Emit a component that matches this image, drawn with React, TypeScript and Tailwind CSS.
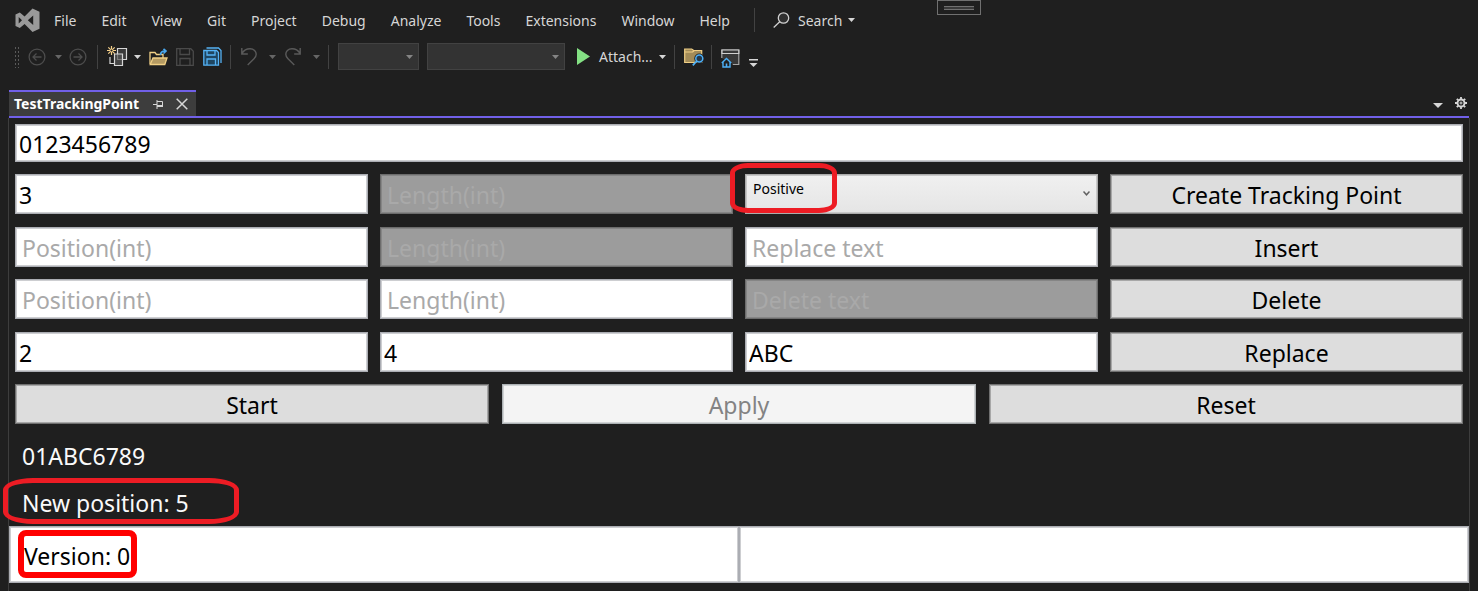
import React from "react";
import clsx from "clsx";

const MENU = ["File", "Edit", "View", "Git", "Project", "Debug", "Analyze", "Tools", "Extensions", "Window", "Help"];

function Caret({ className }: { className?: string }) {
  return (
    <svg width="7" height="4" viewBox="0 0 7 4" className={clsx("shrink-0", className)} fill="currentColor" aria-hidden="true">
      <path d="M0 0h7L3.5 4z" />
    </svg>
  );
}

function Separator() {
  return <div className="h-6 w-px shrink-0 bg-[#424242]" />;
}

function Logo() {
  return (
    <svg width="25" height="25" viewBox="0 0 25 25" aria-hidden="true" className="shrink-0">
      <path
        fill="#999"
        fillRule="evenodd"
        d="M17.5 0.5 24.5 3.8V20.7L17.5 24 9.6 16.1 4.8 20 0.5 18V6.6L4.8 4.6 9.6 8.4ZM18.2 7.5 12.8 12.3 18.2 17.1ZM3.7 9.1V15.6L7 12.3Z"
      />
    </svg>
  );
}

function ArrowCircle({ forward }: { forward?: boolean }) {
  return (
    <svg width="18" height="18" viewBox="0 0 18 18" fill="none" stroke="#4d4d4d" strokeWidth="1.3" aria-hidden="true">
      <circle cx="9" cy="9" r="7.9" />
      {forward ? <path d="M4.5 9h8.5M9.5 5.5 13 9l-3.500 3.500" /> : <path d="M13.500 9H5M8.500 5.500 5 9l3.500 3.500" />}
    </svg>
  );
}

function NewProject() {
  return (
    <svg width="21" height="21" viewBox="0 0 21 21" fill="none" aria-hidden="true">
      <path d="M3 11v6.500h4" stroke="#d6d6d6" strokeWidth="1.200" />
      <path d="M10.500 2.500h9v11h-9z" fill="#3a3a3a" stroke="#d6d6d6" strokeWidth="1.200" />
      <path d="M7.500 8h8v11.500h-8z" fill="#555" fillOpacity=".7" stroke="#d6d6d6" strokeWidth="1.200" />
      <path d="M4.500 0v9M0 4.500h9M1.300 1.300l6.400 6.400M7.700 1.300 1.300 7.700" stroke="#f5d08a" strokeWidth="1.200" />
      <circle cx="4.500" cy="4.500" r="1.100" fill="#202020" />
    </svg>
  );
}

function OpenFolder() {
  return (
    <svg width="20" height="18" viewBox="0 0 20 18" fill="none" aria-hidden="true">
      <path d="M1 16V4.500h5l1.500 2H14V10" stroke="#f0cf85" strokeWidth="1.300" />
      <path d="M1.200 16.500 4 10h14l-2.200 6.500z" fill="#b49a62" stroke="#f0cf85" strokeWidth="1.300" />
      <path d="M11.500 7c0-2.500 1.500-4 4.500-4M14.500.8 17 3l-2.500 2.500" stroke="#4aa8ef" strokeWidth="1.700" />
    </svg>
  );
}

function Save() {
  return (
    <svg width="18" height="18" viewBox="0 0 18 18" fill="none" stroke="#4a4a4a" strokeWidth="1.300" aria-hidden="true">
      <path d="M.7.7h14.100l2.500 2.500v14.100H.7z" />
      <path d="M4 1v5.500h9.500V1M4 17v-6.500h10V17" />
    </svg>
  );
}

function SaveAll() {
  return (
    <svg width="19" height="19" viewBox="0 0 19 19" fill="none" stroke="#55b2f5" strokeWidth="1.300" aria-hidden="true">
      <path d="M3.500 1h12l2.500 2.500v12.500" />
      <path d="M.8 3.500h12.700l2 2v12.700H.8z" fill="#1f4661" />
      <path d="M4 3.500v4.500h8V3.500M4 18v-6h8.500v6" />
    </svg>
  );
}

function Undo({ flip }: { flip?: boolean }) {
  return (
    <svg width="16" height="18" viewBox="0 0 16 18" fill="none" stroke="#5a5a5a" strokeWidth="1.400" aria-hidden="true">
      {flip ? (
        <path d="M15.200 0v6H9.200M15 5.500C13 2 10 .8 7 .8 3 .8.800 3.500.800 6.200c0 2 1 3.300 2.200 4.500l6.300 6.300" />
      ) : (
        <path d="M.8 0v6h6M1 5.500C3 2 6 .8 9 .8c4 0 6.200 2.700 6.200 5.400 0 2-1 3.300-2.200 4.500L6.700 17" />
      )}
    </svg>
  );
}

function FolderSearch() {
  return (
    <svg width="20" height="18" viewBox="0 0 20 18" fill="none" aria-hidden="true">
      <path d="M.7 1h7l2 1.500h8V14.500H.7z" fill="#a28b58" stroke="#f0cf85" strokeWidth="1.200" />
      <path d="M.7 4h8l1.500-1.500" stroke="#f0cf85" strokeWidth="1.200" />
      <circle cx="15.300" cy="10.500" r="5" fill="#202020" />
      <circle cx="15.300" cy="10.500" r="3.500" fill="#24384a" stroke="#4db0f7" strokeWidth="1.500" />
      <path d="m12.800 13-4 4.300" stroke="#4db0f7" strokeWidth="1.700" />
    </svg>
  );
}

function BrowserHome() {
  return (
    <svg width="19" height="19" viewBox="0 0 19 19" fill="none" aria-hidden="true">
      <path d="M.8 9V1h17v14.500h-6" fill="#383838" stroke="#a5a5a5" strokeWidth="1.200" />
      <path d="M1 1h16.800v3.500H1z" fill="#383838" stroke="#d0d0d0" strokeWidth="1.200" />
      <path d="M5.500 9 11 14.500V19H0v-4.500z" fill="#202020" />
      <path d="M.8 14 5.500 9.500l4.700 4.500M2 13v5h7v-5" stroke="#4db0f7" strokeWidth="1.400" />
      <path d="M5.500 18v-3.500" stroke="#4db0f7" strokeWidth="1.600" />
    </svg>
  );
}

function Pin() {
  return (
    <svg width="11" height="9" viewBox="0 0 11 9" fill="none" stroke="#d6d6d6" aria-hidden="true">
      <path d="M0 4.500h4M4 0v9M4 1.500h5.500v5H4" />
      <path d="M4 6h6" strokeWidth="2" />
    </svg>
  );
}

function Gear() {
  return (
    <svg width="12" height="12" viewBox="0 0 12 12" fill="none" stroke="#d6d6d6" aria-hidden="true">
      <path d="M6 0v2M6 10v2M0 6h2M10 6h2M1.800 1.800l1.400 1.400M8.800 8.800l1.400 1.400M1.800 10.200l1.400-1.400M8.800 3.200l1.400-1.400" strokeWidth="1.800" />
      <circle cx="6" cy="6" r="3.500" strokeWidth="1.900" />
      <circle cx="6" cy="6" r="1" />
    </svg>
  );
}

function Field({ label, value, disabled, className }: { label: string; value?: string; disabled?: boolean; className?: string }) {
  return (
    <input
      type="text"
      aria-label={label}
      placeholder={label}
      defaultValue={value}
      disabled={disabled}
      className={clsx(
        "block w-full min-w-0 border pt-px text-[23px] leading-7 text-black outline-none placeholder:text-[#a9a9a9] placeholder:opacity-100",
        disabled
          ? "border-[#6c6c6c] bg-[#9c9c9c] shadow-[inset_0_0_0_1px_#858585]"
          : "border-[#abadb3] bg-white shadow-[inset_0_0_0_1px_#cdced1]",
        value ? "px-[3px]" : "px-[6px]",
        className ?? "h-10"
      )}
    />
  );
}

function Action({ children, disabled }: { children: React.ReactNode; disabled?: boolean }) {
  return (
    <button
      type="button"
      disabled={disabled}
      className={clsx(
        "h-10 w-full border pt-[2px] text-[23px] leading-7",
        disabled
          ? "border-[#adb2b5] bg-[#f4f4f4] text-[#838383] shadow-[inset_0_0_0_1px_#d0d3d4]"
          : "border-[#707070] bg-[#dddddd] text-black shadow-[inset_0_0_0_1px_#a7a7a7]"
      )}
    >
      {children}
    </button>
  );
}

function Combo({ label, className }: { label: string; className: string }) {
  return (
    <div className={clsx("relative shrink-0", className)}>
      <select aria-label={label} disabled className="block h-[27px] w-full appearance-none border border-[#424242] bg-[#333333] opacity-100" />
      <Caret className="pointer-events-none absolute top-3 right-[6px] text-[#858585]" />
    </div>
  );
}

const ROW = "grid grid-cols-4 gap-3";

export default function App() {
  return (
    <div className="relative flex min-h-screen flex-col overflow-hidden bg-[#1f1f1f] font-['Noto_Sans','Open_Sans',sans-serif] text-[#d6d6d6]">
      <div className="absolute top-0 left-[937px] flex h-[15px] w-11 items-center justify-center border border-[#707070]">
        <div className="h-1 w-[30px] border-y border-[#707070] bg-[#3a3a3a]" />
      </div>

      <nav className="flex h-10 items-center pl-[15px] text-sm">
        <Logo />
        <div className="ml-[14px] flex gap-[25px]">
          {MENU.map((item) => (
            <button key={item} type="button" className="pt-px whitespace-nowrap">
              {item}
            </button>
          ))}
        </div>
        <div className="mr-[18px] ml-6 h-6 w-px bg-[#424242]" />
        <button type="button" className="flex items-center">
          <svg width="17" height="16" viewBox="0 0 17 16" fill="none" stroke="#d0d0d0" strokeWidth="1.300" aria-hidden="true">
            <circle cx="10.500" cy="6" r="5.200" fill="#303030" />
            <path d="M6.700 9.800.700 15.500" />
          </svg>
          <span className="ml-2 pt-px">Search</span>
          <Caret className="ml-[6px]" />
        </button>
      </nav>

      <div className="flex h-[33px] items-center pl-[14px] text-sm">
        <div className="h-[22px] w-[6px] shrink-0 bg-[radial-gradient(circle,#5a5a5a_1px,transparent_1px)] bg-[length:3px_4px]" />
        <button type="button" aria-label="Back" className="ml-2"><ArrowCircle /></button>
        <Caret className="ml-[9px] text-[#666]" />
        <button type="button" aria-label="Forward" className="mr-[10px] ml-[7px]"><ArrowCircle forward /></button>
        <Separator />
        <button type="button" aria-label="New project" className="ml-[9px]"><NewProject /></button>
        <Caret className="ml-[6px]" />
        <button type="button" aria-label="Open" className="ml-2"><OpenFolder /></button>
        <button type="button" aria-label="Save" className="ml-[7px]"><Save /></button>
        <button type="button" aria-label="Save all" className="mr-2 ml-[9px]"><SaveAll /></button>
        <Separator />
        <button type="button" aria-label="Undo" className="ml-[10px]"><Undo /></button>
        <Caret className="ml-3 text-[#666]" />
        <button type="button" aria-label="Redo" className="ml-[9px]"><Undo flip /></button>
        <Caret className="mr-2 ml-3 text-[#666]" />
        <Separator />
        <Combo label="Solution configuration" className="ml-[9px] w-[81px]" />
        <Combo label="Solution platform" className="ml-2 w-[138px]" />
        <button type="button" className="mr-2 ml-3 flex items-center">
          <svg width="13" height="17" viewBox="0 0 13 17" aria-hidden="true">
            <path d="M0 0v17l13-8.500z" fill="#84e184" />
          </svg>
          <span className="ml-[9px] w-[54px] whitespace-nowrap text-left">Attach...</span>
          <Caret className="ml-[6px]" />
        </button>
        <Separator />
        <button type="button" aria-label="Find in files" className="mr-[7px] ml-[9px]"><FolderSearch /></button>
        <Separator />
        <button type="button" aria-label="Start page" className="ml-[9px] pt-[3px]"><BrowserHome /></button>
        <button type="button" aria-label="Toolbar options" className="ml-[9px] pt-[14px]">
          <svg width="9" height="9" viewBox="0 0 9 9" fill="#d6d6d6" aria-hidden="true">
            <path d="M0 0h9v1.500H0zM.500 4h8l-4 4z" />
          </svg>
        </button>
      </div>

      <div className="mx-[9px] mt-[17px] flex items-stretch border-b-2 border-[#7160e8]">
        <div className="flex h-[26px] w-[187px] items-center border-t-2 border-[#7160e8] bg-[#3d3d3d] pl-[5px]">
          <span className="w-[139px] text-sm font-bold text-white">TestTrackingPoint</span>
          <button type="button" aria-label="Pin tab"><Pin /></button>
          <button type="button" aria-label="Close tab" className="ml-3">
            <svg width="12" height="12" viewBox="0 0 12 12" stroke="#d6d6d6" strokeWidth="1.500" aria-hidden="true">
              <path d="m.700.700 10.600 10.600M11.300.700.700 11.300" />
            </svg>
          </button>
        </div>
        <div className="ml-auto flex items-center gap-3 pr-[2px]">
          <button type="button" aria-label="Active files" className="pt-1">
            <svg width="10" height="5" viewBox="0 0 10 5" fill="currentColor" aria-hidden="true"><path d="M0 0h10L5 5z" /></svg>
          </button>
          <button type="button" aria-label="Window settings"><Gear /></button>
        </div>
      </div>

      <main className="mx-2 flex grow flex-col border-x border-[#3d3d3d]">
        <div className="px-[6px] pt-[6px]">
          <Field label="Text" value="0123456789" className="h-[38px]" />

          <div className={clsx(ROW, "mt-3")}>
            <Field label="Position(int)" value="3" />
            <Field label="Length(int)" disabled />
            <div className="relative">
              <select
                aria-label="Tracking mode"
                className="block h-10 w-full appearance-none border border-[#acacac] bg-linear-to-b from-[#f0f0f0] to-[#e5e5e5] pr-6 pb-[10px] pl-[7px] text-sm text-black shadow-[inset_0_0_0_1px_#c8c8c8] outline-none"
              >
                <option>Positive</option>
                <option>Negative</option>
              </select>
              <svg width="7" height="5" viewBox="0 0 7 5" fill="none" stroke="#606060" strokeWidth="1.500" className="pointer-events-none absolute top-[17px] right-2" aria-hidden="true">
                <path d="M.5.5 3.500 3.800 6.500.5" />
              </svg>
              <div className="pointer-events-none absolute -top-[11px] -left-[15px] h-[50px] w-[107px] rounded-[18px/10px] border-5 border-[#ed1c24]" />
            </div>
            <Action>Create Tracking Point</Action>
          </div>

          <div className={clsx(ROW, "mt-[13px]")}>
            <Field label="Position(int)" />
            <Field label="Length(int)" disabled />
            <Field label="Replace text" />
            <Action>Insert</Action>
          </div>

          <div className={clsx(ROW, "mt-3")}>
            <Field label="Position(int)" />
            <Field label="Length(int)" />
            <Field label="Delete text" disabled />
            <Action>Delete</Action>
          </div>

          <div className={clsx(ROW, "mt-[13px]")}>
            <Field label="Position(int)" value="2" />
            <Field label="Length(int)" value="4" />
            <Field label="Replace text" value="ABC" />
            <Action>Replace</Action>
          </div>

          <div className="mt-3 grid grid-cols-3 gap-[13px]">
            <Action>Start</Action>
            <Action disabled>Apply</Action>
            <Action>Reset</Action>
          </div>
        </div>

        <div className="mt-[9px] -mb-px text-[23px] leading-[47px] text-[#fafafa]">
          <p className="pl-[13px]">01ABC6789</p>
          <div className="relative pl-[13px]">
            New position: 5
            <div className="pointer-events-none absolute -top-[2px] -left-[6px] h-[46px] w-[236px] rounded-[30px/12px] border-5 border-[#ed1c24]" />
          </div>
        </div>

        <div className="grid grid-cols-2 text-[23px] text-black">
          <div className="relative flex h-[57px] items-center border border-[#abadb3] bg-white pt-[3px] pl-[14px] shadow-[inset_0_0_0_1px_#cdced1]">
            Version: 0
            <div className="pointer-events-none absolute top-[3px] left-2 h-12 w-[119px] rounded-lg border-6 border-[#ff0000]" />
          </div>
          <div className="h-[57px] border border-[#abadb3] bg-white shadow-[inset_0_0_0_1px_#cdced1]" />
        </div>
      </main>
    </div>
  );
}
